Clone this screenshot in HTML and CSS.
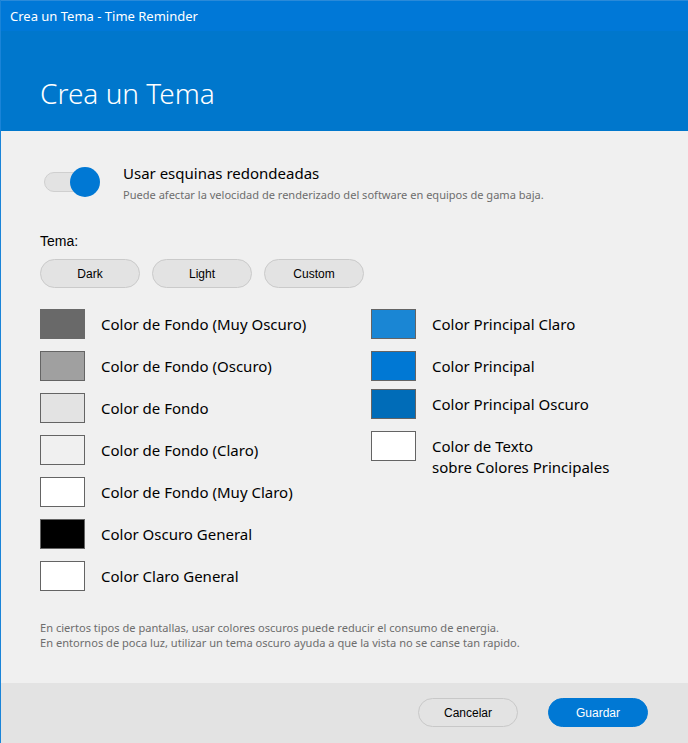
FILE: index.html
```html
<!DOCTYPE html>
<html lang="es">
<head>
<meta charset="utf-8">
<title>Crea un Tema - Time Reminder</title>
<link rel="stylesheet" href="styles.css">
</head>
<body>
<div class="window">
  <div class="titlebar">Crea un Tema - Time Reminder</div>
  <div class="header"><h1 class="heading">Crea un Tema</h1></div>
  <div class="content">
    <div class="toggle-row">
      <div class="toggle"><span class="track"></span><span class="thumb"></span></div>
      <div class="toggle-text">
        <div class="toggle-title">Usar esquinas redondeadas</div>
        <div class="toggle-sub">Puede afectar la velocidad de renderizado del software en equipos de gama baja.</div>
      </div>
    </div>
    <div class="tema-label">Tema:</div>
    <div class="tema-buttons">
      <button class="pill">Dark</button>
      <button class="pill">Light</button>
      <button class="pill">Custom</button>
    </div>
    <div class="colors">
      <div class="col">
        <div class="item"><span class="sw sw-vdark"></span><span class="lbl">Color de Fondo (Muy Oscuro)</span></div>
        <div class="item"><span class="sw sw-dark"></span><span class="lbl">Color de Fondo (Oscuro)</span></div>
        <div class="item"><span class="sw sw-bg"></span><span class="lbl">Color de Fondo</span></div>
        <div class="item"><span class="sw sw-light"></span><span class="lbl">Color de Fondo (Claro)</span></div>
        <div class="item"><span class="sw sw-white"></span><span class="lbl">Color de Fondo (Muy Claro)</span></div>
        <div class="item"><span class="sw sw-black"></span><span class="lbl">Color Oscuro General</span></div>
        <div class="item"><span class="sw sw-white"></span><span class="lbl">Color Claro General</span></div>
      </div>
      <div class="col col-right">
        <div class="item"><span class="sw sw-acc-light"></span><span class="lbl">Color Principal Claro</span></div>
        <div class="item"><span class="sw sw-acc"></span><span class="lbl">Color Principal</span></div>
        <div class="item item-tight"><span class="sw sw-acc-dark"></span><span class="lbl">Color Principal Oscuro</span></div>
        <div class="item item-multi"><span class="sw sw-white"></span><span class="lbl">Color de Texto<br>sobre Colores Principales</span></div>
      </div>
    </div>
    <p class="note">En ciertos tipos de pantallas, usar colores oscuros puede reducir el consumo de energia.<br>En entornos de poca luz, utilizar un tema oscuro ayuda a que la vista no se canse tan rapido.</p>
  </div>
  <div class="footer">
    <button class="pill btn-cancel">Cancelar</button>
    <button class="pill btn-save">Guardar</button>
  </div>
</div>
</body>
</html>
```
FILE: styles.css
```css
* { box-sizing: border-box; }
html, body { margin: 0; padding: 0; }
body {
  width: 688px;
  height: 743px;
  overflow: hidden;
  font-family: "Noto Sans", "Open Sans", sans-serif;
  background: #f0f0f0;
}
.window {
  width: 688px;
  height: 743px;
  border-left: 1px solid #1a84d8;
  display: flex;
  flex-direction: column;
}
.titlebar {
  height: 31px;
  flex: none;
  background: #0078d7;
  border-top: 1px solid #2a8ad9;
  color: #fff;
  font-size: 13px;
  padding-left: 9px;
  display: flex;
  align-items: center;
}
.header {
  height: 100px;
  flex: none;
  background: #0077cc;
  padding: 44px 0 0 39px;
}
.heading {
  margin: 0;
  color: #fff;
  font-weight: 300;
  font-size: 28px;
  line-height: 36px;
}
.content {
  flex: 1;
  background: #f0f0f0;
  padding: 36px 0 0 39px;
  display: flex;
  flex-direction: column;
}
.toggle-row {
  display: flex;
  align-items: flex-start;
}
.toggle {
  position: relative;
  width: 56px;
  height: 30px;
  margin-left: 4px;
  flex: none;
}
.track {
  position: absolute;
  left: 0;
  top: 5px;
  width: 44px;
  height: 20px;
  border-radius: 10px;
  background: #e3e3e3;
  border: 1px solid #cfcfcf;
}
.thumb {
  position: absolute;
  left: 26px;
  top: 0;
  width: 30px;
  height: 30px;
  border-radius: 50%;
  background: #0078d4;
}
.toggle-text {
  margin-left: 23px;
  margin-top: -4px;
}
.toggle-title {
  font-size: 15px;
  line-height: 20px;
  color: #000;
}
.toggle-sub {
  font-size: 11.05px;
  line-height: 14px;
  color: #6d6d6d;
  margin-top: 5px;
}
.tema-label {
  font-family: "Liberation Sans", Arial, sans-serif;
  font-size: 14px;
  line-height: 16px;
  margin-top: 31px;
  color: #000;
}
.tema-buttons {
  display: flex;
  gap: 12px;
  margin-top: 10px;
}
.pill {
  width: 100px;
  height: 29px;
  border-radius: 15px;
  border: 1px solid #cacaca;
  background: #e3e3e3;
  font-family: "Liberation Sans", Arial, sans-serif;
  font-size: 12px;
  color: #000;
  padding: 0;
  display: flex;
  align-items: center;
  justify-content: center;
}
.colors {
  display: flex;
  margin-top: 21px;
}
.col {
  width: 331px;
  flex: none;
  display: flex;
  flex-direction: column;
  gap: 12px;
}
.col-right { width: 300px; }
.item {
  display: flex;
  align-items: center;
  gap: 16px;
}
.item-tight { margin-top: -4px; }
.item-multi { align-items: flex-start; }
.item-multi .lbl { padding-top: 4.5px; }
.sw {
  width: 45px;
  height: 30px;
  flex: none;
  border: 1px solid #646464;
}
.lbl {
  font-size: 15px;
  line-height: 21px;
  color: #000;
}
.sw-vdark { background: #696969; border-color: #696969; }
.sw-dark { background: #a0a0a0; }
.sw-bg { background: #e3e3e3; }
.sw-light { background: #f0f0f0; }
.sw-white { background: #ffffff; }
.sw-black { background: #000000; }
.sw-acc-light { background: #1a86d4; }
.sw-acc { background: #0078d4; }
.sw-acc-dark { background: #006cb8; }
.note {
  margin: 29px 0 0 0;
  font-size: 11.1px;
  line-height: 15px;
  color: #6d6d6d;
}
.footer {
  height: 60px;
  flex: none;
  background: #e3e3e3;
  display: flex;
  justify-content: flex-end;
  align-items: flex-start;
  gap: 30px;
  padding: 15px 40px 0 0;
}
.btn-cancel { background: #e3e3e3; border-color: #c8c8c8; }
.btn-save { background: #0078d4; border-color: #0078d4; color: #fff; }
```
